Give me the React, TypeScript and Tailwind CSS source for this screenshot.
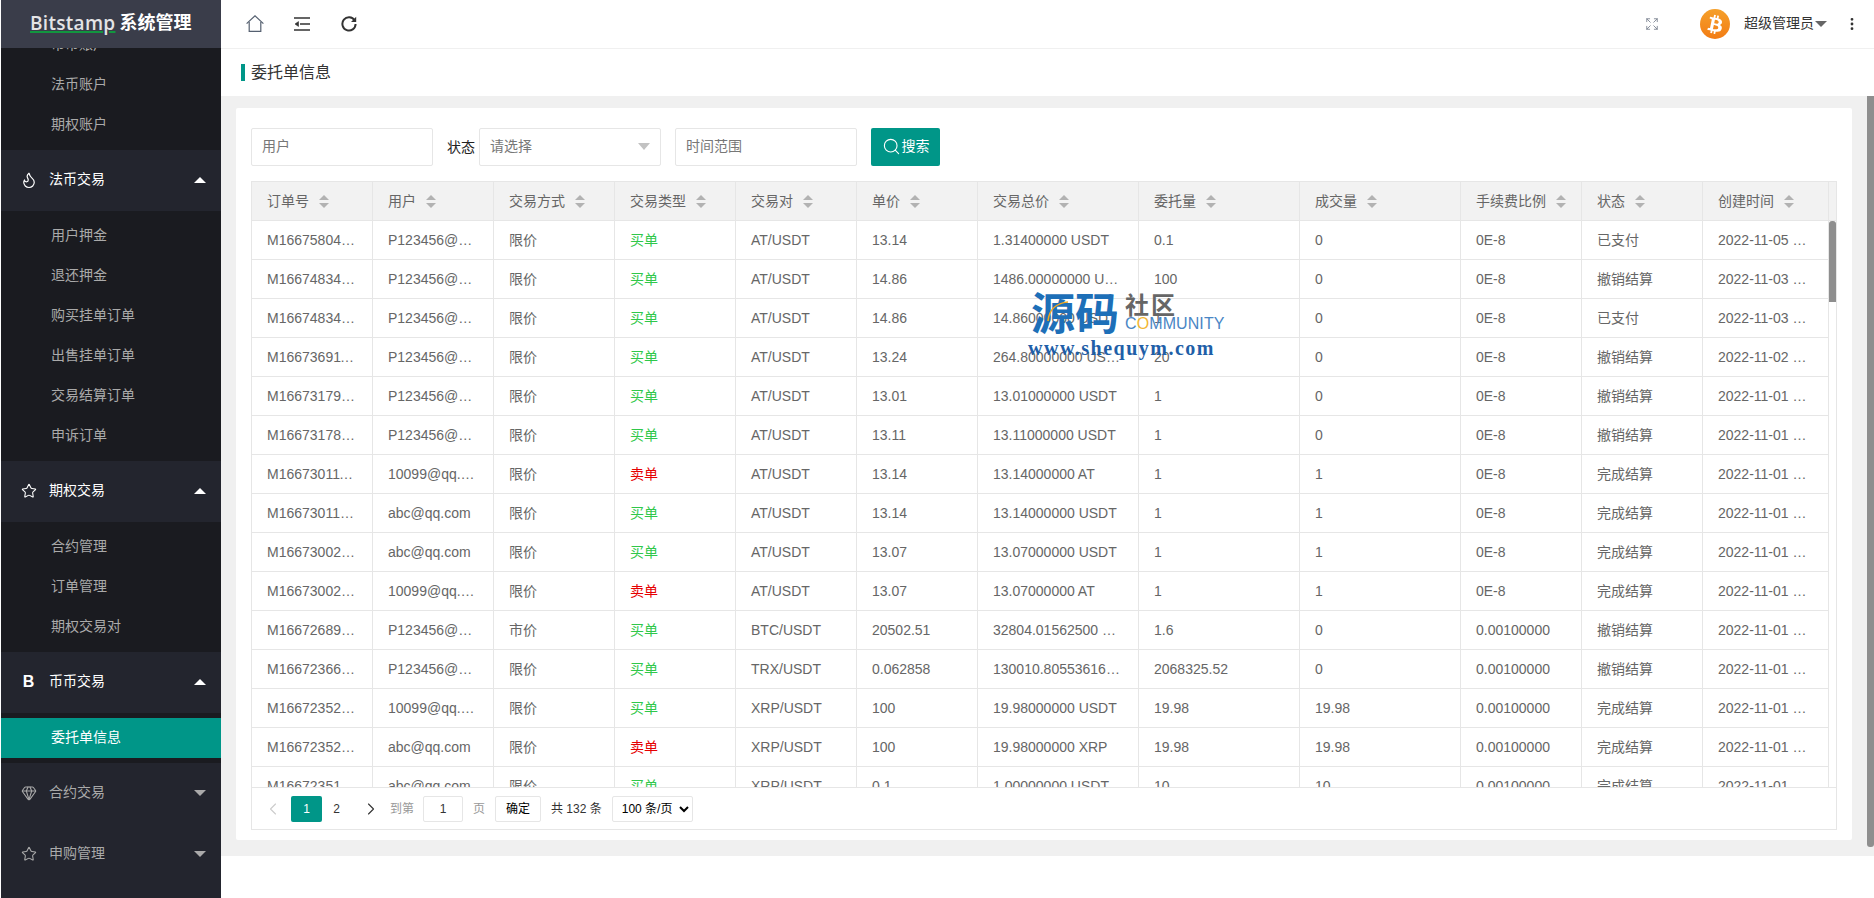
import React from 'react';
import { Flame, Star, Gem, Search, ChevronLeft, ChevronRight, Expand, EllipsisVertical } from 'lucide-react';
import { FaBtc } from 'react-icons/fa';

const SansFont = "[font-family:'Liberation_Sans','Noto_Sans_CJK_SC',sans-serif]";

const Caret = ({ up, light }: { up?: boolean; light?: boolean }) => (
  <span
    className={`block w-0 h-0 border-x-[6px] border-x-transparent ${
      up ? 'border-b-[6px]' : 'border-t-[6px]'
    } ${light ? (up ? 'border-b-white' : 'border-t-white') : up ? 'border-b-[#aaaaaa]' : 'border-t-[#aaaaaa]'}`}
  ></span>
);

const NavHead = ({ icon, label, open }: { icon: React.ReactNode; label: string; open?: boolean }) => (
  <div className={`h-[61px] shrink-0 flex items-center bg-[#23252e] ${open ? 'text-white' : 'text-[#aaaaaa]'}`}>
    <span className="w-[48px] flex justify-center pl-[7px] pb-[1px]">{icon}</span>
    <span className="flex-1 text-[14px] pb-[3px]">{label}</span>
    <span className="mr-[15px] pb-[1px]">
      <Caret up={open} light={open} />
    </span>
  </div>
);

const NavItem = ({ label, active }: { label: string; active?: boolean }) => (
  <div
    className={`h-[40px] shrink-0 flex items-center pl-[50px] pb-[1px] text-[14px] ${
      active ? 'bg-[#009688] text-white' : 'text-[#aaaaaa]'
    }`}
  >
    {label}
  </div>
);

const Sidebar = () => (
  <aside className="w-[221px] h-full shrink-0 flex flex-col border-l border-white bg-[#1a1b20]">
    <div className="h-[48px] shrink-0 bg-[#3a3d4a] flex items-center pl-[29px] pb-[1px] text-white">
      <span className="[font-family:'Open_Sans','Noto_Sans_CJK_SC',sans-serif] text-[19px] font-semibold tracking-[0.3px] text-[#e4e4e6] underline decoration-[#12963f] decoration-2 underline-offset-[1px]">
        Bitstamp
      </span>
      <span className="ml-[4px] text-[18px] font-bold">系统管理</span>
    </div>
    <nav className="flex-1 overflow-hidden flex flex-col">
      <div className="mt-[-23px]">
        <NavItem label="币币账户" />
      </div>
      <NavItem label="法币账户" />
      <NavItem label="期权账户" />
      <div className="h-[5px] shrink-0"></div>

      <NavHead icon={<Flame size={18} strokeWidth={1.6} />} label="法币交易" open />
      <div className="py-[5px]">
        <NavItem label="用户押金" />
        <NavItem label="退还押金" />
        <NavItem label="购买挂单订单" />
        <NavItem label="出售挂单订单" />
        <NavItem label="交易结算订单" />
        <NavItem label="申诉订单" />
      </div>

      <NavHead icon={<Star size={16} strokeWidth={1.6} />} label="期权交易" open />
      <div className="py-[5px]">
        <NavItem label="合约管理" />
        <NavItem label="订单管理" />
        <NavItem label="期权交易对" />
      </div>

      <NavHead icon={<span className="text-[16px] font-bold leading-none">B</span>} label="币币交易" open />
      <div className="py-[5px]">
        <NavItem label="委托单信息" active />
      </div>

      <NavHead icon={<Gem size={16} strokeWidth={1.6} />} label="合约交易" />
      <NavHead icon={<Star size={16} strokeWidth={1.6} />} label="申购管理" />
      <div className="flex-1 bg-[#23252e]"></div>
    </nav>
  </aside>
);

const TopBar = () => (
  <header className="h-[49px] shrink-0 bg-white border-b border-[#f0f0f0] flex items-center text-[#444444]">
    <svg className="ml-[25px] mb-[2px]" width="18" height="17" viewBox="0 0 18 17" fill="none" stroke="#556070" strokeWidth="1.2">
      <path d="M.6 8.6 9 .8l8.4 7.8" />
      <path d="M3.2 7v9.4h11.6V7" />
    </svg>
    <svg className="ml-[30px]" width="16" height="14" viewBox="0 0 16 14" fill="none" stroke="#333333" strokeWidth="1.6">
      <path d="M0 1h16M6 7h10M0 13h16" />
      <path d="M1 7l3.5-2.4v4.8z" fill="#333333" strokeWidth="0.6" />
    </svg>
    <svg className="ml-[31px]" width="16" height="16" viewBox="0 0 16 16" fill="none" stroke="#333333" strokeWidth="2">
      <path d="M13.6 4.4A6.6 6.6 0 1 0 14.6 8" />
      <path d="M15.2 .8v5.2h-5.2z" fill="#333333" stroke="none" />
    </svg>
    <div className="flex-1"></div>
    <Expand size={14} strokeWidth={1.5} className="text-[#7a8290] mr-[41px]" />
    <div className="w-[30px] h-[30px] rounded-full bg-linear-to-b from-[#f5a02a] to-[#f27c14] flex items-center justify-center mr-[14px]">
      <FaBtc size={19} className="text-white rotate-[12deg]" />
    </div>
    <span className="text-[14px] text-[#333333] pb-[1px]">超级管理员</span>
    <span className="w-0 h-0 border-x-[6px] border-x-transparent border-t-[6px] border-t-[#666666] ml-[1px]"></span>
    <EllipsisVertical size={16} strokeWidth={2.2} className="text-[#333333] ml-[17px] mr-[14px]" />
  </header>
);

const colClasses = [
  'w-[121px]', 'w-[121px]', 'w-[121px]', 'w-[121px]', 'w-[121px]', 'w-[121px]',
  'w-[161px]', 'w-[161px]', 'w-[161px]', 'w-[121px]', 'w-[121px]', 'w-[126px]',
];

const columns = ['订单号', '用户', '交易方式', '交易类型', '交易对', '单价', '交易总价', '委托量', '成交量', '手续费比例', '状态', '创建时间'];

const P = 'P123456@qq.com';
const Q = '10099@qq.com';
const A = 'abc@qq.com';

const rows = [
  ['M1667580412345', P, '限价', '买单', 'AT/USDT', '13.14', '1.31400000 USDT', '0.1', '0', '0E-8', '已支付', '2022-11-05 10:12:30'],
  ['M1667483412345', P, '限价', '买单', 'AT/USDT', '14.86', '1486.00000000 USDT', '100', '0', '0E-8', '撤销结算', '2022-11-03 21:40:11'],
  ['M1667483498765', P, '限价', '买单', 'AT/USDT', '14.86', '14.86000000 USDT', '1', '0', '0E-8', '已支付', '2022-11-03 21:38:02'],
  ['M1667369112345', P, '限价', '买单', 'AT/USDT', '13.24', '264.80000000 USDT', '20', '0', '0E-8', '撤销结算', '2022-11-02 14:05:47'],
  ['M1667317912345', P, '限价', '买单', 'AT/USDT', '13.01', '13.01000000 USDT', '1', '0', '0E-8', '撤销结算', '2022-11-01 23:45:19'],
  ['M1667317812345', P, '限价', '买单', 'AT/USDT', '13.11', '13.11000000 USDT', '1', '0', '0E-8', '撤销结算', '2022-11-01 23:43:28'],
  ['M1667301112345', Q, '限价', '卖单', 'AT/USDT', '13.14', '13.14000000 AT', '1', '1', '0E-8', '完成结算', '2022-11-01 19:11:52'],
  ['M1667301198765', A, '限价', '买单', 'AT/USDT', '13.14', '13.14000000 USDT', '1', '1', '0E-8', '完成结算', '2022-11-01 19:11:40'],
  ['M1667300212345', A, '限价', '买单', 'AT/USDT', '13.07', '13.07000000 USDT', '1', '1', '0E-8', '完成结算', '2022-11-01 19:00:16'],
  ['M1667300298765', Q, '限价', '卖单', 'AT/USDT', '13.07', '13.07000000 AT', '1', '1', '0E-8', '完成结算', '2022-11-01 19:00:03'],
  ['M1667268912345', P, '市价', '买单', 'BTC/USDT', '20502.51', '32804.01562500 USDT', '1.6', '0', '0.00100000', '撤销结算', '2022-11-01 10:08:33'],
  ['M1667236612345', P, '限价', '买单', 'TRX/USDT', '0.062858', '130010.80553616000 USDT', '2068325.52', '0', '0.00100000', '撤销结算', '2022-11-01 01:10:25'],
  ['M1667235212345', Q, '限价', '买单', 'XRP/USDT', '100', '19.98000000 USDT', '19.98', '19.98', '0.00100000', '完成结算', '2022-11-01 00:46:51'],
  ['M1667235298765', A, '限价', '卖单', 'XRP/USDT', '100', '19.98000000 XRP', '19.98', '19.98', '0.00100000', '完成结算', '2022-11-01 00:46:44'],
  ['M1667235112345', A, '限价', '买单', 'XRP/USDT', '0.1', '1.00000000 USDT', '10', '10', '0.00100000', '完成结算', '2022-11-01 00:45:12'],
];

const ColGroup = () => (
  <colgroup>
    {colClasses.map((c, i) => (
      <col key={i} className={c} />
    ))}
  </colgroup>
);

const SortIcon = () => (
  <span className="flex flex-col gap-[3px] shrink-0">
    <span className="block w-0 h-0 border-x-[5px] border-x-transparent border-b-[5px] border-b-[#b2b2b2]"></span>
    <span className="block w-0 h-0 border-x-[5px] border-x-transparent border-t-[5px] border-t-[#b2b2b2]"></span>
  </span>
);

const DataTable = () => (
  <div className="h-[649px] w-[1586px] shrink-0 border border-[#e6e6e6] flex flex-col text-[14px] text-[#666666]">
    <div className="h-[39px] shrink-0 bg-[#f2f2f2] flex border-b border-[#e6e6e6]">
      <table className="table-fixed w-[1577px] border-separate border-spacing-0">
        <ColGroup />
        <thead>
          <tr>
            {columns.map((c) => (
              <th key={c} className="h-[38px] p-0 font-normal text-left border-r border-[#e6e6e6]">
                <div className="flex items-center gap-[10px] pl-[15px]">
                  <span>{c}</span>
                  <SortIcon />
                </div>
              </th>
            ))}
          </tr>
        </thead>
      </table>
    </div>
    <div className="flex-1 overflow-hidden flex">
      <table className="table-fixed w-[1577px] h-fit border-separate border-spacing-0 shrink-0">
        <ColGroup />
        <tbody>
          {rows.map((r, i) => (
            <tr key={i}>
              {r.map((cell, j) => (
                <td key={j} className="h-[39px] p-0 border-r border-b border-[#e6e6e6]">
                  <div
                    className={`px-[15px] truncate ${
                      cell === '买单' ? 'text-[#2fc84a]' : cell === '卖单' ? 'text-[#e60000]' : ''
                    }`}
                  >
                    {cell}
                  </div>
                </td>
              ))}
            </tr>
          ))}
        </tbody>
      </table>
      <div className="w-[7px] shrink-0">
        <div className="w-[7px] h-[81px] bg-[#8e8e8e] rounded-t-[3px]"></div>
      </div>
    </div>
    <div className="h-[42px] shrink-0 border-t border-[#e6e6e6] flex items-center text-[12px]">
      <ChevronLeft size={20} strokeWidth={1.3} className="ml-[11px] text-[#cccccc]" />
      <span className="ml-[8px] w-[31px] h-[26px] bg-[#009688] text-white rounded-[2px] flex items-center justify-center">1</span>
      <span className="w-[29px] text-center text-[#333333]">2</span>
      <ChevronRight size={20} strokeWidth={1.3} className="ml-[10px] text-[#333333]" />
      <span className="ml-[9px] text-[#999999]">到第</span>
      <input
        defaultValue="1"
        className="ml-[9px] w-[40px] h-[26px] border border-[#e6e6e6] rounded-[2px] text-center text-[#333333] outline-none"
      />
      <span className="ml-[10px] text-[#999999]">页</span>
      <button className="ml-[10px] w-[46px] h-[26px] border border-[#e6e6e6] rounded-[2px] bg-white text-[#000000]">确定</button>
      <span className="ml-[10px] text-[#333333]">共 132 条</span>
      <select className="ml-[10px] w-[81px] h-[26px] border border-[#e6e6e6] rounded-[2px] pl-[5px] text-[#000000] bg-white">
        <option>100 条/页</option>
      </select>
    </div>
  </div>
);

const SearchBar = () => (
  <div className="flex items-center h-[38px] shrink-0 text-[14px]">
    <input
      placeholder="用户"
      className="w-[182px] h-[38px] border border-[#e6e6e6] rounded-[2px] pl-[10px] pb-[2px] text-[#333333] placeholder:text-[#777777] outline-none"
    />
    <span className="ml-[14px] w-[28px] text-[#222222] pt-[1px]">状态</span>
    <div className="ml-[4px] w-[182px] h-[38px] border border-[#e6e6e6] rounded-[2px] pl-[10px] pr-[10px] pb-[2px] flex items-center justify-between text-[#777777]">
      <span>请选择</span>
      <span className="w-0 h-0 border-x-[6px] border-x-transparent border-t-[7px] border-t-[#c2c2c2]"></span>
    </div>
    <input
      placeholder="时间范围"
      className="ml-[14px] w-[182px] h-[38px] border border-[#e6e6e6] rounded-[2px] pl-[10px] pb-[2px] text-[#333333] placeholder:text-[#777777] outline-none"
    />
    <button className="ml-[14px] w-[69px] h-[38px] pb-[1px] bg-[#009688] text-white rounded-[2px] flex items-center justify-center gap-[1px]">
      <Search size={19} strokeWidth={1.4} />
      <span>搜索</span>
    </button>
  </div>
);

const Watermark = () => (
  <div className="absolute left-[1028px] top-[293px] w-[200px] h-[72px] pointer-events-none">
    <div className="flex">
      <span className="text-[44px] leading-[44px] font-bold text-[#1d6fb8] ml-[3px]">源码</span>
      <div className="ml-[6px] flex flex-col">
        <span className="text-[24px] leading-[26px] font-bold text-[#666666] tracking-[2px]">社区</span>
        <span className="text-[16px] leading-[16px] mt-[-3px] text-[#4a86c5] tracking-[0.1px]">
          C<span className="text-[#f2b632]">O</span>MMUNITY
        </span>
      </div>
    </div>
    <svg className="absolute left-[19px] top-[8px]" width="22" height="22" viewBox="0 0 22 22" fill="none" stroke="#f2a71f" strokeWidth="1.6">
      <path d="M1 20C2 9 9 2 21 1" />
    </svg>
    <div className="[font-family:'Liberation_Serif',serif] text-[20px] leading-[22px] font-bold text-[#1f5fa8] tracking-[1.5px]">
      www.shequym.com
    </div>
  </div>
);

export default function App() {
  return (
    <div className={`relative w-[1874px] h-[898px] overflow-hidden flex bg-white ${SansFont}`}>
      <Sidebar />
      <main className="flex-1 min-w-0 flex flex-col">
        <TopBar />
        <div className="h-[47px] shrink-0 flex items-center bg-white pl-[20px]">
          <span className="w-[4px] h-[17px] bg-[#009688]"></span>
          <span className="ml-[6px] text-[16px] text-[#333333]">委托单信息</span>
        </div>
        <div className="h-[760px] shrink-0 flex bg-[#f0f0f0]">
          <div className="flex-1 pl-[15px] pt-[12px] pr-[15px] pb-[16px]">
            <div className="h-[732px] bg-white rounded-[2px] pt-[20px] px-[15px] flex flex-col gap-[15px]">
              <SearchBar />
              <DataTable />
            </div>
          </div>
          <div className="w-[7px] h-[751px] bg-[#8e8e8e] rounded-b-[3px]"></div>
        </div>
      </main>
      <Watermark />
    </div>
  );
}
